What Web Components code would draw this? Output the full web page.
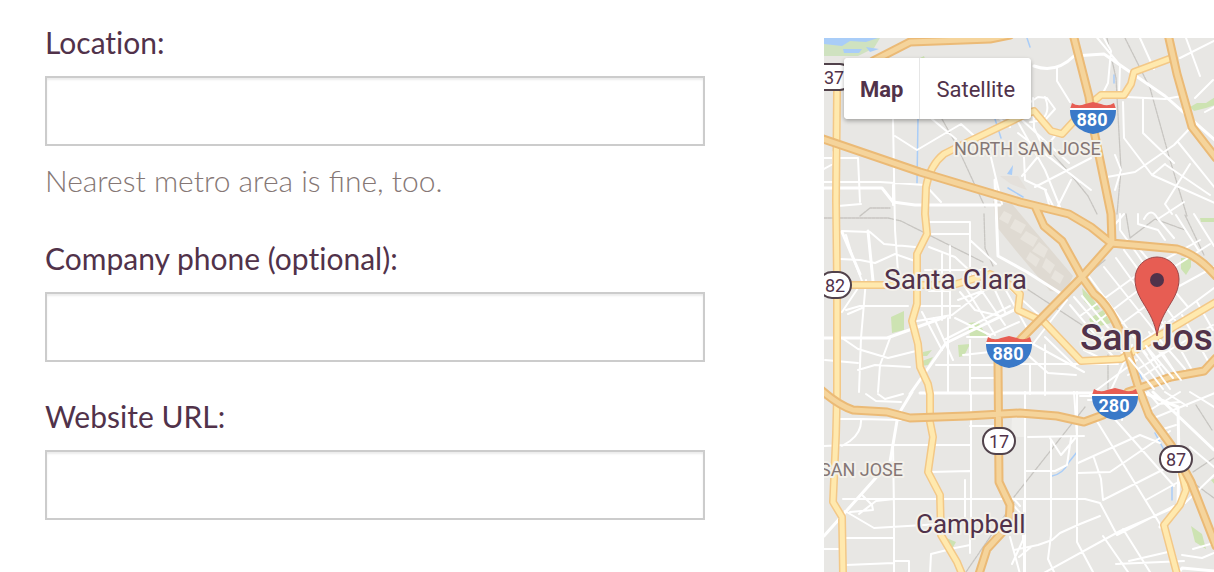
<!DOCTYPE html>
<html lang="en">
<head>
<meta charset="utf-8">
<meta name="viewport" content="width=device-width, initial-scale=1">
<title>Company details</title>
<style>
body{margin:0;background:#fff;color:#51324a;font-family:Lato,"Open Sans",sans-serif}
</style>
</head>
<body>
<company-page>
  <form-field field-name="location" label="Location:" hint="Nearest metro area is fine, too."></form-field>
  <form-field field-name="phone" type="tel" label="Company phone (optional):"></form-field>
  <form-field field-name="website" type="url" label="Website URL:"></form-field>
  <area-map slot="map"><map-switch></map-switch></area-map>
</company-page>

<template id="page-template">
<style>
:host{display:grid;grid-template-columns:minmax(0,660fr) minmax(0,390fr);column-gap:119px;min-height:100vh;padding-left:45px;box-sizing:border-box}
form{display:flex;flex-direction:column;gap:36px;padding:24px 0;margin:0}
.map{display:grid;padding-top:38px}
</style>
<form><slot></slot></form>
<div class="map"><slot name="map"></slot></div>
</template>

<template id="field-template">
<style>
:host{display:block}
label{display:block;font-size:30px;line-height:36px;margin-bottom:16px;font-variant-ligatures:no-common-ligatures}
input{display:block;box-sizing:border-box;width:100%;height:70px;padding:0 16px;border:2px solid #ccc;border-radius:0;background:#fff;box-shadow:inset 0 2px 2px rgba(0,0,0,.08);color:inherit;font:inherit;font-size:30px;outline:none}
p{margin:16px 0 0;font-family:"Lato Light",Lato,sans-serif;font-size:30px;line-height:36px;padding-bottom:6px;font-weight:300;color:#857775}
p[hidden]{display:none}
</style>
<label for="control"></label>
<input id="control" aria-describedby="hint">
<p id="hint" hidden></p>
</template>

<template id="switch-template">
<style>
:host{display:flex;width:max-content;border-radius:4px;background:#fff;box-shadow:0 2px 4px rgba(0,0,0,.3);overflow:hidden}
button{height:61px;margin:0;padding:2px 16px 0;border:0;background:#fff;color:#51324a;font:400 22px/26px Roboto,sans-serif;cursor:pointer}
button+button{border-left:1px solid #e6e6e6}
button[aria-pressed=true]{font-weight:700}
</style>
<button type="button" aria-pressed="true">Map</button><button type="button" aria-pressed="false">Satellite</button>
</template>

<template id="map-template">
<style>
:host{display:grid;position:relative;min-height:534px;overflow:hidden;background:#e8e7e4}
svg{display:block;width:100%;height:100%;min-height:0}
.controls{position:absolute;left:20px;top:20px}
text{font-family:Roboto,sans-serif;fill:#51324a}
.halo{paint-order:stroke;stroke:#f3f1eb;stroke-width:4px;stroke-linejoin:round}
.area{font-size:18px;fill:#857775}
.town{font-size:28px}
.village{font-size:26px}
.city{font-size:37px;font-weight:500}
.num{font-size:18px;text-anchor:middle}
.inter{font-size:18px;font-weight:700;fill:#fff;text-anchor:middle}
.line{fill:none;stroke-linejoin:round;stroke-linecap:round}
</style>
<svg viewBox="824 38 390 534" preserveAspectRatio="xMinYMin slice" role="img" aria-label="Map of San Jose">
<defs>
<g id="interstate"><path d="M-21-16Q-15-12-8-15L0-17 8-15Q15-12 21-16L23-10H-23Z" fill="#e75d53"/><path d="M-23-9H23C23 5 13 13 0 15-13 13-23 5-23-9Z" fill="#3a79c8"/><path d="M-23-10H23" stroke="#fff" stroke-width="2"/></g>
<rect id="state" x="-16" y="-13" width="32" height="26" rx="13" fill="#fff" stroke="#51424b" stroke-width="2"/>
<path id="yellow" d="M837 92L836 200 837 281 837 394 836 435 833 502 842 517 843 574M1020 117L970 141 944 154Q930 165 926 187L925 214 927 234 917 254 917 304 912 321 918 344 920 367 928 384 930 394 930 422 933 437 928 472 940 495 941 535 957 562 962 574M1014 119L1034 111 1051 131 1062 134 1074 121M1094 101L1101 95 1124 95 1131 84 1134 72 1169 59M852 285H953L990 274 1012 286 1020 294 1018 310 1044 322 1081 361 1121 359 1157 337 1216 302M1182 474L1186 490 1180 505 1164 525 1177 574"/>
<path id="orange" d="M873 61L910 42 990 39 1010 35M820 138L920 172 1020 202 1069 214 1091 227 1111 243 1177 249Q1198 255 1216 276M1035 206L1044 226 1062 241 1082 277 1094 294Q1112 307 1126 347L1139 389 1149 415 1171 445 1191 482 1216 546M1073 34L1089 97 1094 131 1111 214 1112 243 1082 277 1021 339 1005 356M998 362L999 482 1010 505 1009 525 987 549 979 574M1168 34L1177 74 1192 127 1216 158M820 389Q838 405 853 410L887 412 910 418 967 416 1020 413 1057 416 1084 422 1103 415M1128 392L1137 389 1171 377 1204 371 1216 358"/>
</defs>
<rect x="824" y="38" width="390" height="534" fill="#e8e7e4"/>
<g fill="#dfdad2"><path d="M993 201L1012 204 1073 276 1065 293 1050 291 1017 252 996 226Z"/><path d="M1000 176H1018L1027 190 1011 184Z" opacity=".5"/></g>
<g fill="#e8e4dd"><path d="M1004 211l8 4-4 9-9-5zM1015 219l11 6-5 9-11-6zM1026 231l12 7-5 9-13-8zM1039 242l9 7-4 9-12-7zM1030 252l10 7-4 8-10-8zM1046 258l9 7-5 9-8-7zM1055 270l9 6-4 8-9-6z"/></g>
<path d="M824 38H880L874 48 858 56H824Z" fill="#cfe2c0"/>
<path d="M824 38H878L866 42 850 41 842 46 824 44ZM843 49H862L859 53H844ZM866 47L879 49 870 52ZM1007 174L1013 165 1012 175Z" fill="#a9cdf8"/>
<g fill="#cde3b2"><path d="M891 317L904 311V330L892 333ZM968 323L978 322 987 336 970 337ZM958 345L970 344 964 356 959 357ZM923 352l9-2-5 6h-4zM922 361l11-4-5 8-6 1zM1082 288L1092 298 1100 309 1094 311 1084 301ZM1089 319L1103 310 1111 323 1093 328ZM1181 258h10v9l-5 8-5-6zM1190 107L1197 103 1206 103 1215 97V105L1206 108 1194 111ZM1200 218H1214V222H1201ZM944 537L956 542 952 549 944 541ZM1191 526L1202 534 1206 549 1195 542ZM1211 480L1215 478V485ZM920 58L924 56 926 62Z"/></g>
<g class="line" stroke="#a9cdf8" stroke-width="1.5"><path d="M1027 38L1030 47M918 118L917 183M995 119L1001 138M1008 188L1023 197M1052 476Q1063 474 1069 462L1077 452M1155 433L1164 450M1172 485V500M1139 372L1142 379M1114 75V83"/></g>
<g class="line" stroke="#c7c5c1" stroke-width="1.3" stroke-dasharray="3 1"><path d="M824 218L888 218 901 221 983 262M984 214L985 248 993 266M900 63L909 80M942 119L956 144 985 207M1107 38L1116 78 1121 170 1117 214M1125 38L1150 88 1170 160 1187 216M1040 140L1067 170 1088 196 1097 214M1027 289L1088 329 1105 348M1108 355V389M1014 497L1085 407M966 572L1014 502M1126 214L1130 238 1155 219 1185 230M1193 472L1214 458M1192 482L1214 498M1196 405L1212 430M1185 215L1204 255M860 216L870 208H890M1105 260L1085 277"/></g>
<g class="line" stroke="#fff" stroke-width="3"><path d="M1034 66Q1056 74 1074 56L1104 54 1165 96 1216 141M824 188H882L893 202 915 205H1000M824 338H887L912 329 945 317M910 394L946 343 1018 308M824 536L890 462 898 415 912 392M995 180L998 256 1027 272 1060 293M920 393H1110M1178 574L1182 568 1215 571M1142 392L1178 407 1179 460 1178 505 1160 527M1153 392L1214 450M868 231L873 281M842 232L860 274"/></g>
<g class="line" stroke="#fff" stroke-width="2"><path d="M824 158H858L860 202M848 102H885L893 119 895 230 898 272M833 152V164L824 169M895 136L917 150 961 124 989 149 1002 204M1010 127L999 118M932 119L956 139M846 103V116M838 206L861 204M824 182H880L925 185 941 202M842 231L870 232 884 244 915 247M840 259L860 260 875 263 895 254 915 261M846 235L852 255 862 281M893 185L893 205M928 222H970V281M932 234H970M929 247L955 257 985 285M970 240L996 264M942 254V320M950 246V318M925 270H988M917 282H942M846 310L860 306H908M842 312L860 285 873 282M848 314L862 308M866 280L861 338 859 392M842 338L858 349 888 358 920 350M858 370L875 365 910 367M825 360L858 363M890 338L880 365 878 392M917 306H960M922 312L942 350M934 318L953 360M948 318V392M960 292L975 310 1000 316M964 285L995 335M975 281L1005 325M987 273L1006 314M999 278L1028 330M1008 287L1040 316M936 365H995M970 340L970 394M963 355L990 352M944 340L1010 306M955 318L990 335 1019 322M967 337H990M917 321L952 315 990 286M970 378H998M958 300L998 285M929 291H950"/>
<path d="M1104 38L1111 51 1108 83 1103 93M1120 66L1119 94M1057 68V81L1070 102M1045 97Q1051 112 1042 119M1033 98L1034 128 1047 155 1080 182M1014 115L1045 170 1060 207M1023 107L1038 97 1047 98 1055 109 1045 120 1030 122M1021 119L1069 163M1018 133L1091 190M1022 176L1059 131M1035 187L1091 158M1024 157L1025 180 1046 190M1045 190L1053 206M1107 96L1165 99 1182 96M1123 102L1124 138 1152 175 1165 164M1143 98V133L1174 163M1115 155L1121 170 1115 190M1107 177L1135 172 1174 145 1192 126M1178 142L1215 188M1190 164L1165 204 1172 214M1152 175L1215 203M1166 165L1210 195M1180 58L1214 41M1186 38L1200 76M1195 98L1213 80M1205 112L1214 107M1094 34L1119 64M1140 38L1154 69M1045 190L1050 208M1057 208L1071 180"/>
<path d="M1120 214V230L1138 255 1156 282M1138 214V224L1158 230 1165 240M1124 250L1175 320M1136 245L1188 307M1074 297L1124 355M1082 296L1135 360M1070 305L1116 360M1088 275L1147 355M1104 267L1158 335M1116 258L1175 340M1080 316L1137 275 1200 240M1089 328L1144 286 1210 244M1099 340L1154 300 1214 267M1117 360L1214 288M1128 375L1178 345 1213 325M1135 330L1169 382M1149 332L1178 377M1165 322L1192 370M1182 315L1208 361M1197 302L1213 330M1067 300L1033 344 1084 372M1020 348L1048 373 1076 375M1014 364H1118M1045 337L1075 366M1090 395L1137 360M1110 392L1132 345M1045 395V345M1084 350L1104 360M1030 364V394M1176 215L1199 251M1194 214L1214 246M1158 219L1184 202M1110 230L1124 214M1144 219Q1151 206 1158 219L1174 238"/>
<path d="M840 419H861Q862 432 850 441L842 446M862 419L901 420M866 394L876 401 901 402M878 394L885 399 903 394M824 446L845 445H970M930 472L970 471M971 392V520M893 445L894 510V574M843 499H999M862 495L872 505 873 510 850 512M894 499L876 501 859 514M845 511L874 528 941 524M842 538H894M824 549H842M846 565L894 563M894 561H909V574M930 574L931 554 955 548 970 545M970 525V553M955 499H1024V572M1025 392V572M1025 471H1055M1028 437L1084 436M1050 438L1061 455 1077 436 1074 392M1071 438L1067 465 1055 471M1077 392V542L1093 572M1051 440V535L1048 559 1054 572M1025 499H1085L1100 503 1117 535 1174 506M1078 463L1140 435 1160 443M1078 473L1110 472 1170 431M1095 418L1171 542 1180 574M1094 458L1101 479 1103 500 1180 461M1112 416L1174 486M1122 420L1124 402M1042 574L1120 531 1178 506M1103 536L1128 572M1123 529L1150 572M1146 500L1182 480M1116 564L1184 561M1129 561L1168 552M1182 555L1202 558 1214 553M1185 503L1214 475M1190 447L1214 467M1193 549L1214 543M1080 396H1095M1088 400H1099M1148 392L1158 404 1180 402M1165 392L1187 406M1190 392L1214 407M1150 410L1180 392M1154 418L1215 393M1160 430L1176 425M1014 550L1038 545 1052 540 1060 533 1080 524 1100 516M1019 557L1031 547M1014 499L1020 506M1010 537L1020 574M1014 506L1023 516V540L1012 564M965 480V520M1085 422H1077M970 426H996"/></g>
<path d="M1012 417H1024V437H1011Z" fill="#efeeeb"/>
<use href="#yellow" class="line" stroke="#f3c887" stroke-width="8"/><use href="#yellow" class="line" stroke="#ffe9ae" stroke-width="5"/>
<use href="#orange" class="line" stroke="#ebba76" stroke-width="9"/><use href="#orange" class="line" stroke="#f5d49b" stroke-width="5"/>
<g class="line" stroke="#fff" stroke-width="2"><path d="M1129 358L1154 389M1136 354L1163 389M1142 350L1170 389M1146 346L1173 378M1154 345L1181 380M1150 361L1170 348M1143 376L1160 365M1160 340L1185 369"/></g>
<use href="#interstate" x="1093" y="119"/><text class="inter" x="1092" y="126">880</text>
<use href="#interstate" x="1009" y="353"/><text class="inter" x="1008" y="360">880</text>
<use href="#interstate" x="1115" y="405"/><text class="inter" x="1114" y="412">280</text>
<rect x="810" y="64" width="40" height="26" rx="10" fill="#fff" stroke="#51424b" stroke-width="2"/><text class="num" x="829" y="84">237</text>
<use href="#state" x="835" y="285"/><text class="num" x="835" y="292">82</text>
<use href="#state" x="999" y="441"/><text class="num" x="999" y="448">17</text>
<use href="#state" x="1176" y="459"/><text class="num" x="1176" y="466">87</text>
<text class="area halo" x="954" y="155">NORTH SAN JOSE</text>
<text class="area halo" x="820" y="476">SAN JOSE</text>
<text class="town halo" x="884" y="289">Santa Clara</text>
<text class="village halo" x="916" y="533">Campbell</text>
<text class="city halo" x="1080" y="350">San Jos</text>
<path d="M1157 336C1153 309 1135 300 1135 279A22 22 0 0 1 1179 279C1179 300 1161 309 1157 336Z" fill="#e75d53" stroke="#9d4748" stroke-width="1"/><circle cx="1157" cy="280" r="7" fill="#51324a"/>
</svg>
<div class="controls"><slot></slot></div>
</template>

<script>
class TemplateElement extends HTMLElement {
  connectedCallback() {
    if (this.shadowRoot) return;
    const root = this.attachShadow({ mode: 'open' });
    root.append(document.getElementById(this.constructor.template).content.cloneNode(true));
    this.ready(root);
  }
  ready() {}
}
class CompanyPage extends TemplateElement { static template = 'page-template'; }
class FormField extends TemplateElement {
  static template = 'field-template';
  ready(root) {
    const input = root.querySelector('input');
    const hint = root.querySelector('p');
    root.querySelector('label').textContent = this.getAttribute('label');
    input.name = this.getAttribute('field-name');
    input.type = this.getAttribute('type') || 'text';
    if (this.hasAttribute('hint')) {
      hint.textContent = this.getAttribute('hint');
      hint.hidden = false;
    }
  }
}
class MapSwitch extends TemplateElement {
  static template = 'switch-template';
  ready(root) {
    const buttons = root.querySelectorAll('button');
    buttons.forEach(button => button.addEventListener('click', () => {
      buttons.forEach(b => b.setAttribute('aria-pressed', String(b === button)));
    }));
  }
}
class AreaMap extends TemplateElement { static template = 'map-template'; }
customElements.define('company-page', CompanyPage);
customElements.define('form-field', FormField);
customElements.define('map-switch', MapSwitch);
customElements.define('area-map', AreaMap);
</script>
</body>
</html>
